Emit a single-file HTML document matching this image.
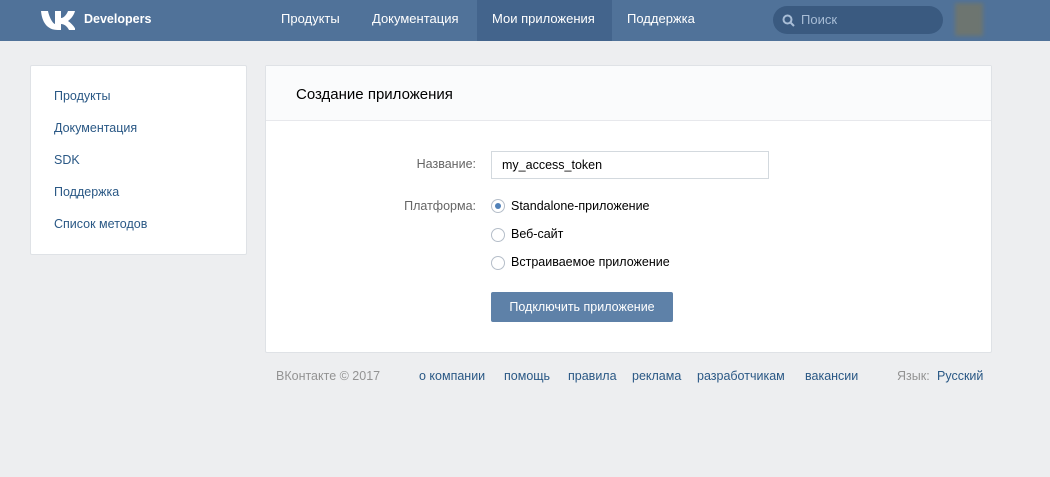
<!DOCTYPE html><html><head><meta charset="utf-8"><style>
*{margin:0;padding:0;box-sizing:border-box}
body{width:1050px;height:477px;background:#edeef0;font-family:"Liberation Sans",sans-serif;font-size:12.5px;color:#000;position:relative;overflow:hidden}
.hd{position:absolute;left:0;top:0;width:1050px;height:41px;background:#507299}
.hd a{position:absolute;top:0;height:41px;line-height:38px;color:#fff;font-size:13px}
.act{background:#43648c;}
.srch{position:absolute;left:773px;top:6px;width:170px;height:28px;border-radius:14px;background:#3a5a80;color:#a8bdd6;line-height:28px;padding-left:28px;font-size:13px}
.ava{position:absolute;left:955px;top:3px;width:28px;height:33px;background:#6d7570;filter:blur(2px)}
.box{position:absolute;background:#fff;border:1px solid #dfe2e6;border-radius:2px}
.lm a{display:block;position:absolute;left:23px;color:#2a5885}
.lbl{position:absolute;color:#656565;text-align:right;width:110px;left:100px}
.rad{position:absolute;width:14px;height:14px;border:1px solid #b5bec9;border-radius:50%;background:#fff}
.rt{position:absolute;color:#000}
.ft{position:absolute;top:369px;color:#2a5885}
</style></head><body>
<div class="hd">
<svg style="position:absolute;left:41px;top:10px" width="34" height="20" viewBox="0 0 34 20"><path d="M0 1h7c1 5 4 12 7 13V1h6v7c3 0 6-4 7-7h7c-1 4-4 8-7 10 3 2 6 5 8 9h-7c-2-4-5-6-8-6v6h-3C6 20 1 12 0 1z" fill="#fff"/></svg>
<a style="left:84px;font-weight:bold;font-size:12.5px">Developers</a>
<a style="left:281px">Продукты</a>
<a style="left:372px">Документация</a>
<a class="act" style="left:477px;width:135px;padding-left:15px">Мои приложения</a>
<a style="left:627px">Поддержка</a>
<div class="srch"><svg style="position:absolute;left:9px;top:8px" width="13" height="13" viewBox="0 0 13 13"><circle cx="5.5" cy="5.5" r="4" fill="none" stroke="#a8bdd6" stroke-width="2"/><path d="M8.5 8.5l3.5 3.5" stroke="#a8bdd6" stroke-width="2"/></svg>Поиск</div>
<div class="ava"></div>
</div>
<div class="box lm" style="left:30px;top:65px;width:217px;height:190px">
<a style="top:23px">Продукты</a><a style="top:55px">Документация</a><a style="top:87px">SDK</a><a style="top:119px">Поддержка</a><a style="top:151px">Список методов</a>
</div>
<div class="box" style="left:265px;top:65px;width:727px;height:288px">
<div style="height:55px;background:#fafbfc;border-bottom:1px solid #e7e8ec;padding:20px 0 0 30px;font-size:15px;color:#000">Создание приложения</div>
<div class="lbl" style="top:91px">Название:</div>
<div style="position:absolute;left:225px;top:85px;width:278px;height:28px;border:1px solid #d3d9de;padding:6px 0 0 10px">my_access_token</div>
<div class="lbl" style="top:133px">Платформа:</div>
<div class="rad" style="left:225px;top:133px"><div style="width:6px;height:6px;border-radius:50%;background:#5181b8;margin:3px"></div></div>
<div class="rt" style="left:245px;top:133px">Standalone-приложение</div>
<div class="rad" style="left:225px;top:162px"></div><div class="rt" style="left:245px;top:161px">Веб-сайт</div>
<div class="rad" style="left:225px;top:190px"></div><div class="rt" style="left:245px;top:189px">Встраиваемое приложение</div>
<div style="position:absolute;left:225px;top:226px;width:182px;height:30px;background:#5e81a8;border-radius:2px;color:#fff;text-align:center;line-height:30px;font-size:12.5px">Подключить приложение</div>
</div>
<div class="ft" style="left:276px;color:#939393">ВКонтакте © 2017</div>
<div class="ft" style="left:419px">о компании</div>
<div class="ft" style="left:504px">помощь</div>
<div class="ft" style="left:568px">правила</div>
<div class="ft" style="left:632px">реклама</div>
<div class="ft" style="left:697px">разработчикам</div>
<div class="ft" style="left:805px">вакансии</div>
<div class="ft" style="left:897px;color:#939393">Язык:</div>
<div class="ft" style="left:937px">Русский</div>
</body></html>
